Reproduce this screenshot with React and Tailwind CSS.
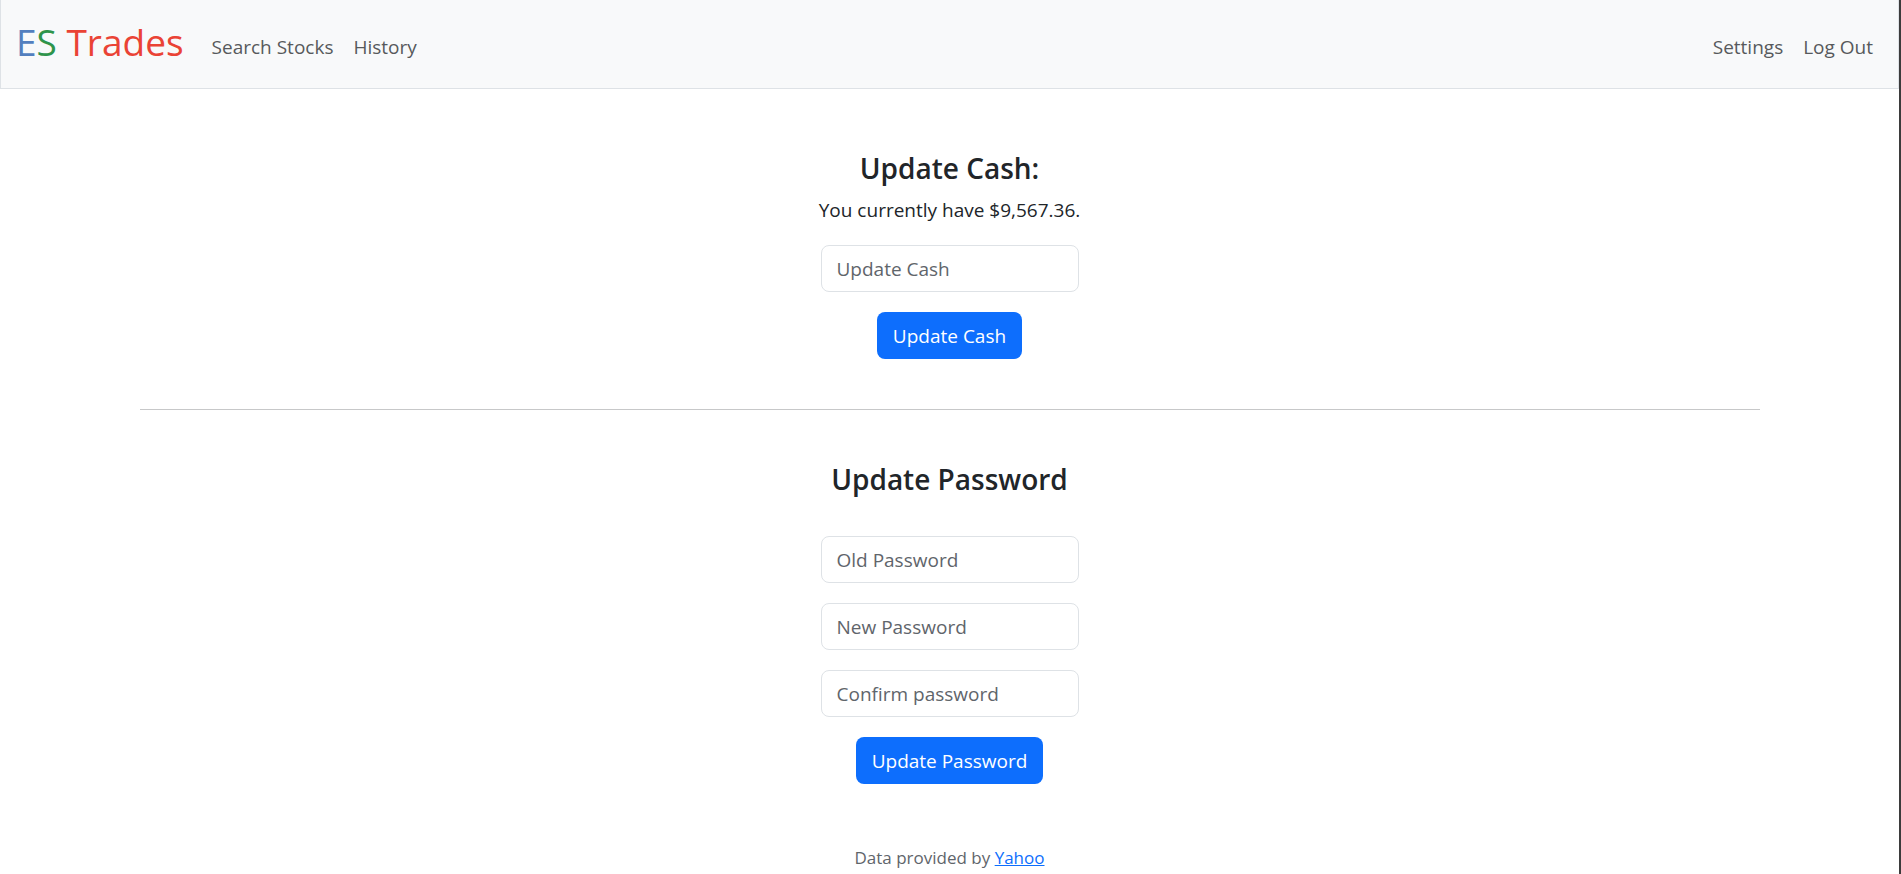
const inputClass =
  "block h-[47px] w-[258px] rounded-lg border border-[#dee2e6] bg-white px-[15px] text-[19px] leading-[30px] text-[#212529] placeholder:text-[#5f656b] focus:outline-2 focus:outline-[#86b7fe]";

const buttonClass =
  "h-[47px] cursor-pointer rounded-lg bg-[#0d6efd] px-4 text-[19px] leading-[30px] text-white hover:bg-[#0b5ed7]";

function NavLink({ href, children }) {
  return (
    <a href={href} className="text-[19px] leading-[30px] text-[#57595c] hover:text-[#212529]">
      {children}
    </a>
  );
}

function Field({ id, label, type = "text" }) {
  return (
    <input
      id={id}
      name={id}
      type={type}
      aria-label={label}
      placeholder={label}
      autoComplete="off"
      className={inputClass}
    />
  );
}

export default function App() {
  return (
    <div className="min-h-screen border-r-2 border-[#3b3b3b] bg-white font-['Open_Sans','Noto_Sans',sans-serif] text-[#212529]">
      <nav className="flex h-[89px] items-center justify-between border border-t-0 border-[#dee2e6] bg-[#f8f9fa] pr-[25px] pb-1 pl-[15px]">
        <div className="flex items-center">
          <a href="/" className="mr-[28px] text-[37px] leading-[54px]">
            <span className="text-[#537fbe]">E</span>
            <span className="text-[#2e944b]">S</span> <span className="text-[#ea4335]">Trades</span>
          </a>
          <div className="flex gap-5 pt-2.5">
            <NavLink href="/quote">Search Stocks</NavLink>
            <NavLink href="/history">History</NavLink>
          </div>
        </div>
        <div className="flex gap-5 pt-2.5">
          <NavLink href="/settings">Settings</NavLink>
          <NavLink href="/logout">Log Out</NavLink>
        </div>
      </nav>

      <main className="mx-auto w-full max-w-[1650px] px-[15px] pt-[60px] text-center">
        <section>
          <h1 className="mb-2 text-[28px] leading-[38px] font-semibold">Update Cash:</h1>
          <p className="mb-5 text-[19px] leading-[30px]">You currently have $9,567.36.</p>
          <form className="flex flex-col items-center gap-5" onSubmit={(e) => e.preventDefault()}>
            <Field id="cash" label="Update Cash" />
            <button type="submit" className={buttonClass}>
              Update Cash
            </button>
          </form>
        </section>

        <hr className="my-[50px] border-t border-[#c7c8c9]" />

        <section>
          <h2 className="mb-[38px] text-[28px] leading-[38px] font-semibold">Update Password</h2>
          <form className="flex flex-col items-center gap-5" onSubmit={(e) => e.preventDefault()}>
            <Field id="old-password" label="Old Password" type="password" />
            <Field id="new-password" label="New Password" type="password" />
            <Field id="confirm-password" label="Confirm password" type="password" />
            <button type="submit" className={buttonClass}>
              Update Password
            </button>
          </form>
        </section>
      </main>

      <footer className="mt-[60px] text-center text-[17px] leading-[28px] text-[#5f656b]">
        Data provided by{" "}
        <a href="https://finance.yahoo.com/" className="text-[#0d6efd] underline">
          Yahoo
        </a>
      </footer>
    </div>
  );
}
